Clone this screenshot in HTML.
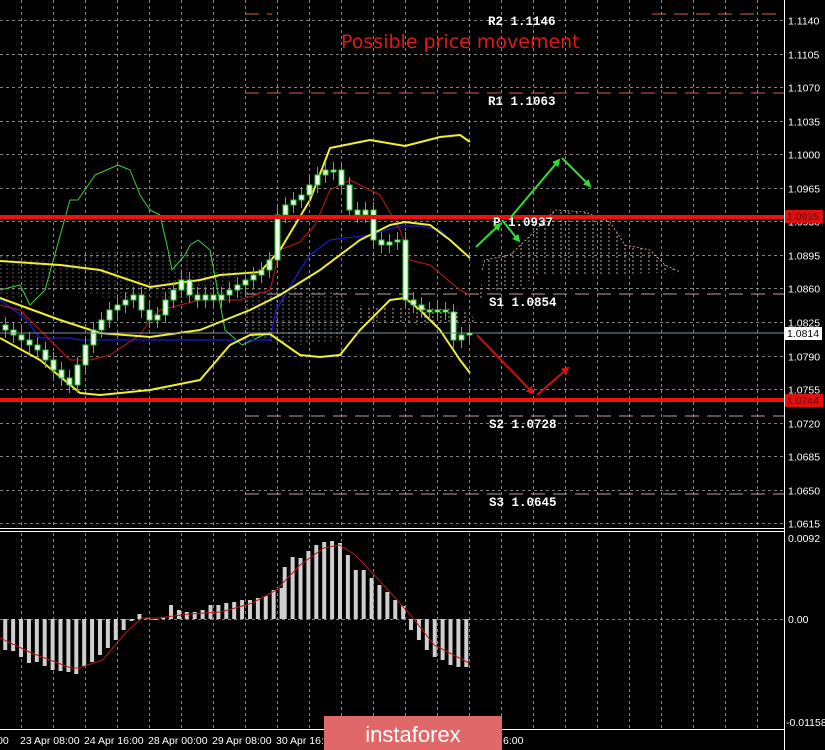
<!DOCTYPE html>
<html><head><meta charset="utf-8"><style>
html,body{margin:0;padding:0;background:#000;}
body{width:825px;height:750px;overflow:hidden;position:relative;font-family:"Liberation Sans",sans-serif;}
svg{position:absolute;left:0;top:0;}
.ax{fill:#fff;font-size:10.5px;font-family:"Liberation Sans",sans-serif;}
.pv{fill:#fff;font-size:12.5px;font-weight:bold;font-family:"Liberation Mono",monospace;}
</style></head><body>
<svg id="s" width="825" height="750" viewBox="0 0 825 750" xmlns="http://www.w3.org/2000/svg">
<defs>
<pattern id="hatchW" width="6" height="4" patternUnits="userSpaceOnUse"><line x1="1" y1="0" x2="1" y2="2" stroke="#999" stroke-width="0.8"/></pattern>
<pattern id="hatchS" width="8" height="4" patternUnits="userSpaceOnUse"><line x1="1" y1="0" x2="1" y2="2" stroke="#e8b8a0" stroke-width="0.9"/></pattern>
<marker id="ag" markerWidth="8" markerHeight="8" refX="6" refY="4" orient="auto" markerUnits="userSpaceOnUse"><path d="M0,0 L8,4 L0,8 Z" fill="#2ee02e"/></marker>
<marker id="ar" markerWidth="8" markerHeight="8" refX="6" refY="4" orient="auto" markerUnits="userSpaceOnUse"><path d="M0,0 L8,4 L0,8 Z" fill="#e01010"/></marker>
</defs>
<g id="grid"></g>
<g id="piv" stroke="#d06050" stroke-width="1" stroke-dasharray="14,8">
<line x1="245" y1="14" x2="272" y2="14"/><line x1="652" y1="14" x2="784" y2="14"/>
<line x1="245" y1="93" x2="784" y2="93"/>
<line x1="245" y1="294" x2="784" y2="294" stroke="#c0a098"/>
<line x1="245" y1="416" x2="784" y2="416" stroke="#c0a098"/>
<line x1="245" y1="494" x2="784" y2="494" stroke="#c0a098"/>
</g>
<path d="M0,255 L60,262 L100,250 L160,250 L235,255 L240,290 L200,300 L120,300 L60,290 L0,300Z" fill="url(#hatchW)" opacity="0.7"/>
<path d="M240,290 L300,285 L340,292 L350,310 L340,340 L300,345 L245,338Z" fill="url(#hatchW)"/>
<path d="M355,305 L420,308 L470,310 L475,322 L420,325 L360,320Z" fill="url(#hatchS)"/>
<path d="M482,270 L485,260 L510,255 L530,236 L555,210 L585,212 L610,222 L625,245 L650,250 L665,265 L680,272 L600,275 L535,275 L525,285 L485,292 L480,300Z" fill="url(#hatchS)"/>
<path d="M482,270 L485,260 L510,255 L530,236 L555,210 L585,212 L610,222 L625,245 L650,250 L665,265 L680,272" fill="none" stroke="#e8b8a0" stroke-width="0.8" stroke-dasharray="2,2"/>
<g id="ind" fill="none" stroke-linejoin="round">
<polyline stroke="#3bd13b" stroke-width="1" points="0,290 20,285 30,305 45,290 70,200 78,200 95,175 118,165 130,170 140,195 150,210 160,215 168,250 172,270 185,255 190,245 198,240 210,250 225,330 242,345 270,332"/>
<polyline stroke="#1a1ad0" stroke-width="1.3" points="0,300 25,318 40,338 70,338 80,340 240,340 270,340 276,310 300,270 310,255 330,240 370,235 400,226 420,226 440,230 460,250"/>
<polyline stroke="#c01818" stroke-width="1" points="0,305 20,310 40,330 70,360 90,360 110,355 140,335 150,320 160,310 200,300 240,300 270,290 280,250 300,242 315,225 330,190 350,180 380,195 400,230 410,260 430,265 460,290 470,295"/>
<polyline stroke="#f0f030" stroke-width="2" points="0,261 60,265 100,270 150,287 200,280 220,275 260,272 280,250 310,200 330,148 370,140 405,146 440,137 460,135 470,142"/>
<polyline stroke="#f0f030" stroke-width="2" points="0,298 60,320 100,333 150,337 200,330 250,310 280,295 320,270 360,240 390,225 405,222 430,225 450,240 470,258"/>
<polyline stroke="#f0f030" stroke-width="2" points="0,338 40,360 80,393 100,395 150,390 200,380 230,345 250,335 270,334 300,355 320,357 340,355 360,330 390,300 405,298 420,310 440,330 460,360 470,373"/>
</g>
<g id="cand"></g>
<line x1="0" y1="333" x2="784" y2="333" stroke="#8090a0" stroke-width="1"/>
<rect x="0" y="215" width="784" height="4" fill="#f01010"/>
<rect x="0" y="398" width="784" height="4" fill="#f01010"/>
<text x="341" y="48" fill="#e01818" font-size="19" font-family="DejaVu Sans,sans-serif">Possible price movement</text>
<text class="pv" x="488" y="25">R2 1.1146</text>
<text class="pv" x="488" y="105">R1 1.1063</text>
<text class="pv" x="493" y="226">P 1.0937</text>
<text class="pv" x="489" y="306">S1 1.0854</text>
<text class="pv" x="489" y="428">S2 1.0728</text>
<text class="pv" x="489" y="506">S3 1.0645</text>
<g stroke="#2ee02e" stroke-width="2" fill="none">
<line x1="476" y1="247" x2="500" y2="224" marker-end="url(#ag)"/>
<line x1="502" y1="220" x2="519" y2="241" marker-end="url(#ag)"/>
<line x1="511" y1="217" x2="559" y2="160" marker-end="url(#ag)"/>
<line x1="562" y1="158" x2="590" y2="186" marker-end="url(#ag)"/>
</g>
<g stroke="#d01010" stroke-width="2" fill="none">
<line x1="477" y1="335" x2="533" y2="393" marker-end="url(#ar)"/>
<line x1="537" y1="395" x2="568" y2="368" marker-end="url(#ar)"/>
</g>
<line x1="784.5" y1="0" x2="784.5" y2="750" stroke="#fff"/>
<line x1="0" y1="528.5" x2="784" y2="528.5" stroke="#fff"/>
<line x1="0" y1="531.5" x2="784" y2="531.5" stroke="#fff"/>
<line x1="0" y1="729.5" x2="784" y2="729.5" stroke="#fff"/>
<g id="lab"></g>
<rect x="785" y="210" width="38" height="13" fill="#e01010"/><text x="787" y="220" class="ax" style="fill:#600">1.0935</text>
<rect x="785" y="327" width="37" height="13" fill="#fff"/><text x="787" y="337" class="ax" style="fill:#000">1.0814</text>
<rect x="785" y="394" width="38" height="13" fill="#e01010"/><text x="787" y="404" class="ax" style="fill:#600">1.0744</text>
<text class="ax" x="788" y="542">0.0092</text>
<text class="ax" x="788" y="623">0.00</text>
<text class="ax" x="786" y="726">-0.01158</text>
<g id="macd"></g>
<g class="ax"><text x="-3" y="744">00</text><text x="20" y="744">23 Apr 08:00</text><text x="84" y="744">24 Apr 16:00</text><text x="148" y="744">28 Apr 00:00</text><text x="212" y="744">29 Apr 08:00</text><text x="276" y="744">30 Apr 16:00</text><text x="503" y="744">6:00</text></g>
<rect x="324" y="716" width="178" height="34" fill="#e06868"/>
<text x="413" y="742" text-anchor="middle" fill="#fff" font-size="22" font-family="Liberation Sans,sans-serif">instaforex</text>
</svg>
<script>
var NS="http://www.w3.org/2000/svg";
function el(p,t,a){var e=document.createElementNS(NS,t);for(var k in a)e.setAttribute(k,a[k]);document.getElementById(p).appendChild(e);return e;}
for(var i=0;i<16;i++){var y=Math.round(20+33.55*i)+0.5;el("grid","line",{x1:0,y1:y,x2:784,y2:y,stroke:"#aaa","stroke-width":0.8,"stroke-dasharray":"3,3"});
var p=(1.1140-0.0035*i).toFixed(4);el("lab","text",{x:788,y:y+4,"class":"ax"}).textContent=p;}
for(var x=21;x<784;x+=32){el("grid","line",{x1:x+.5,y1:0,x2:x+.5,y2:527,stroke:"#aaa","stroke-width":0.8,"stroke-dasharray":"3,3"});
el("grid","line",{x1:x+.5,y1:533,x2:x+.5,y2:728,stroke:"#aaa","stroke-width":0.8,"stroke-dasharray":"3,3"});}
el("grid","line",{x1:0,y1:619.5,x2:784,y2:619.5,stroke:"#aaa","stroke-width":0.8,"stroke-dasharray":"3,3"});
var c=[330,335,340,345,350,360,370,378,385,365,345,330,320,310,305,300,295,310,320,315,300,290,280,295,300,295,300,295,290,285,280,275,270,260,215,205,200,195,185,175,170,170,185,210,215,210,240,245,242,240,300,305,310,312,310,312,340,335,333];
var prev=325;
for(var i=0;i<c.length;i++){var x=5+8*i,o=prev,cl=c[i];var t=Math.min(o,cl),b=Math.max(o,cl);if(b-t<2){b=t+2;}
el("cand","line",{x1:x+.5,y1:t-8,x2:x+.5,y2:b+8,stroke:"#3c3","stroke-width":1});
el("cand","rect",{x:x-2,y:t,width:5,height:b-t,fill:"#eaffe8",stroke:"#3c3","stroke-width":1});prev=cl;}
var S=1.579;
var pts=[[3,650],[8,651],[13,657],[18,663],[23,662],[28,666],[33,670],[38,671],[43,672],[48,674],[53,666],[58,662],[63,655],[68,648],[73,640],[78,630],[83,621],[88,614],[93,618],[98,619],[103,617],[108,605],[113,610],[118,612],[123,612],[128,610],[133,605],[138,605],[143,603],[148,602],[153,600],[158,600],[163,598],[168,596],[173,590],[178,588],[180,567],[185,557],[190,558],[195,551],[200,545],[205,542],[210,541],[215,543],[220,555],[225,570],[230,570],[235,578],[240,585],[245,592],[250,600],[255,606],[260,630],[265,640],[270,650],[275,657],[280,660],[285,665],[290,667],[295,667]];
pts.forEach(function(p){var t=Math.min(p[1],619),h=Math.abs(p[1]-619)||1;el("macd","rect",{x:p[0]*S-1.5,y:t,width:4,height:h,fill:"#cfcfcf"});});
var sig="0,638 20,653 45,668 50,668 65,660 80,632 90,618 100,618 120,614 140,612 160,603 175,590 190,565 205,548 215,545 225,555 240,580 260,615 275,645 297,663".split(" ").map(function(q){var a=q.split(",");return (a[0]*S).toFixed(1)+","+a[1];}).join(" ");
el("macd","polyline",{points:sig,fill:"none",stroke:"#c01818","stroke-width":1});
</script>
</body></html>
